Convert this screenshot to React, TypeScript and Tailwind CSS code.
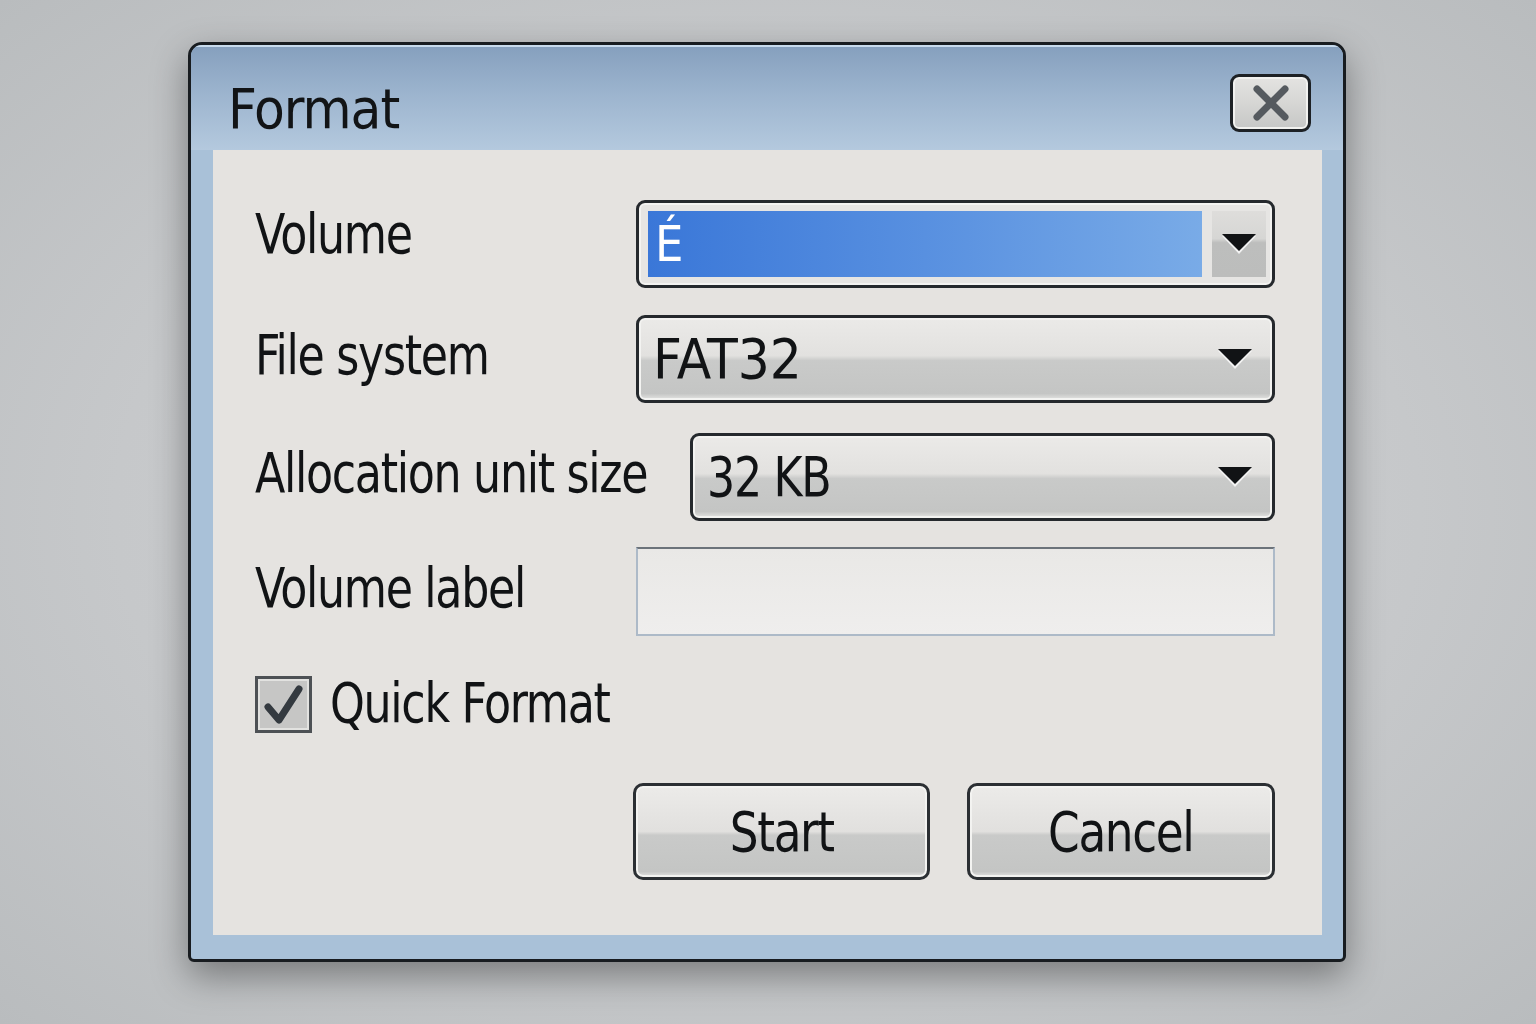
import React from "react";

const font = "font-['Liberation_Sans_Narrow','DejaVu_Sans_Condensed','Liberation_Sans',sans-serif]";
// the reference face is narrower than the installed condensed one, squeeze it a little
const label = "inline-block text-[56px] leading-none text-[#111315] tracking-[-1.5px] whitespace-nowrap scale-x-[0.88] origin-left";

function Arrow() {
  return (
    <svg width="38" height="22" viewBox="0 0 38 22" className="shrink-0">
      <polygon points="2,3 36,3 19,21" fill="#f2f2f2" />
      <polygon points="2,1 36,1 19,18" fill="#111315" />
    </svg>
  );
}

function Combo({ value, width, squeeze }: { value: string; width: string; squeeze?: boolean }) {
  return (
    <div
      className={`${width} h-[88px] rounded-[9px] border-[3px] border-[#25292d] bg-[linear-gradient(to_bottom,#ebeae8_0%,#e2e1df_46%,#c9cac9_52%,#c4c5c4_92%,#e6e6e4_100%)] shadow-[inset_0_0_0_2px_#f3f3f1] flex items-center pl-[14px] pr-[18px]`}
    >
      <span
        className={`flex-1 text-[56px] leading-none text-[#111315] ${squeeze ? "tracking-[-1.5px] scale-x-[0.88] origin-left" : "tracking-normal"}`}
      >
        {value}
      </span>
      <Arrow />
    </div>
  );
}

const btn =
  "rounded-[10px] border-[3px] border-[#2b2f33] bg-[linear-gradient(to_bottom,#ecebe9_0%,#e1e0de_50%,#c9cac9_54%,#c4c5c4_94%,#e4e4e2_100%)] shadow-[inset_0_0_0_2px_#f3f3f1] h-[97px] flex items-center justify-center";

export default function App() {
  return (
    <div
      className={`min-h-screen w-full pt-[42px] pl-[188px] bg-[radial-gradient(ellipse_at_center,#d2d4d6_0%,#c6c8ca_60%,#b9bcbe_100%)] ${font}`}
    >
      {/* Dialog window */}
      <div className="w-[1158px] h-[920px] rounded-t-[14px] rounded-b-[6px] border-[3px] border-[#181c20] bg-[#a9c1d8] shadow-[0_14px_36px_rgba(0,0,0,0.38)] flex flex-col overflow-hidden">
        {/* Title bar */}
        <div className="h-[105px] shrink-0 flex items-start justify-between pl-[37px] pr-[32px] border-t-2 border-[#c8dbed] bg-[linear-gradient(to_bottom,#86a0be_0%,#9cb4ce_45%,#b4c9de_100%)]">
          <span className="mt-[34px] text-[56px] leading-none tracking-[-1px] text-[#121416]">Format</span>
          <button className="mt-[27px] w-[81px] h-[58px] rounded-[9px] border-[3px] border-[#1d2125] bg-[linear-gradient(to_bottom,#e4e3e1_0%,#d6d6d4_50%,#c6c7c6_100%)] shadow-[inset_0_0_0_2px_#f1f1ef] flex items-center justify-center">
            <svg width="40" height="38" viewBox="0 0 40 38">
              <line x1="6" y1="5" x2="34" y2="33" stroke="#555a5f" strokeWidth="7" strokeLinecap="round" />
              <line x1="34" y1="5" x2="6" y2="33" stroke="#555a5f" strokeWidth="7" strokeLinecap="round" />
            </svg>
          </button>
        </div>

        {/* Content */}
        <div className="flex-1 ml-[22px] mr-[21px] mb-[24px] bg-[#e5e3e0] pl-[42px] pr-[47px] pt-[50px] flex flex-col">
          {/* Volume */}
          <div className="h-[88px] flex items-center">
            <div className="w-[381px] pb-[20px]">
              <span className={label}>Volume</span>
            </div>
            <div className="w-[639px] h-[88px] rounded-[9px] border-[3px] border-[#25292d] bg-[#e6e5e3] shadow-[inset_0_0_0_2px_#f3f3f1] flex items-center pl-[9px] pr-[6px] py-[8px]">
              <div className="flex-1 h-[66px] bg-[linear-gradient(to_right,#3a77d8_0%,#5890e0_50%,#79abe7_100%)] flex items-center pl-[7px]">
                <span className="text-[50px] leading-none text-white">É</span>
              </div>
              <div className="ml-[10px] w-[54px] h-[66px] bg-[linear-gradient(to_bottom,#dedddb_0%,#d6d6d4_42%,#bdbebd_48%,#bcbdbc_100%)] flex items-center justify-center">
                <Arrow />
              </div>
            </div>
          </div>

          {/* File system */}
          <div className="mt-[27px] h-[88px] flex items-center">
            <div className="w-[381px] pb-[8px]">
              <span className={label}>File system</span>
            </div>
            <Combo value="FAT32" width="w-[639px]" />
          </div>

          {/* Allocation unit size */}
          <div className="mt-[30px] h-[88px] flex items-center">
            <div className="w-[435px] pb-[8px]">
              <span className={label}>Allocation unit size</span>
            </div>
            <Combo value="32 KB" width="w-[585px]" squeeze />
          </div>

          {/* Volume label */}
          <div className="mt-[26px] h-[89px] flex items-center">
            <div className="w-[381px] pb-[8px]">
              <span className={label}>Volume label</span>
            </div>
            <div className="w-[639px] h-[89px] border-2 border-[#adbac8] border-t-[#6c737a] bg-[linear-gradient(to_bottom,#e9e8e6,#efeeed)]" />
          </div>

          {/* Quick Format */}
          <div className="mt-[40px] h-[57px] flex items-center">
            <div className="w-[57px] h-[57px] border-[3px] border-[#4d5155] bg-[#c6c6c5] shadow-[inset_0_0_0_2px_#e2e2e0] flex items-center justify-center">
              <svg width="44" height="44" viewBox="0 0 44 44">
                <path d="M6 24 L17 37 L37 6" fill="none" stroke="#343a40" strokeWidth="7" strokeLinecap="round" strokeLinejoin="round" />
              </svg>
            </div>
            <div className="ml-[18px] pb-[4px]">
              <span className={label}>Quick Format</span>
            </div>
          </div>

          {/* Buttons */}
          <div className="mt-[50px] flex justify-end gap-[37px]">
            <button className={`w-[297px] ${btn}`}>
              <span className="inline-block text-[56px] leading-none tracking-[-1.5px] text-[#111315] scale-x-[0.9]">Start</span>
            </button>
            <button className={`w-[308px] ${btn}`}>
              <span className="inline-block text-[56px] leading-none tracking-[-1.5px] text-[#111315] scale-x-[0.9]">Cancel</span>
            </button>
          </div>
        </div>
      </div>
    </div>
  );
}
